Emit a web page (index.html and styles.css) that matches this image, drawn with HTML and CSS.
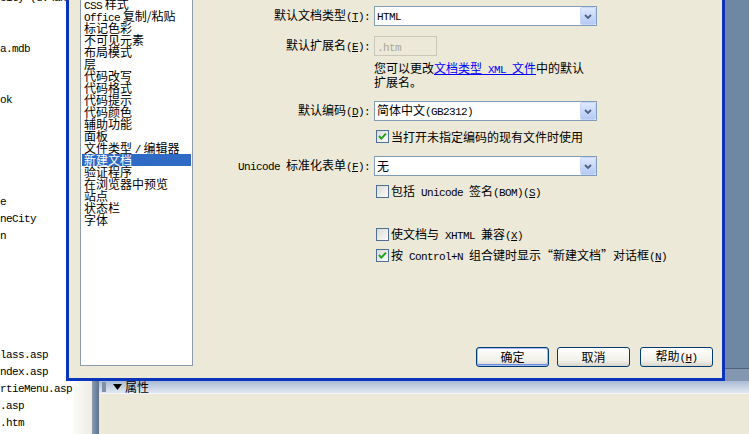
FILE: index.html
```html
<!DOCTYPE html>
<html lang="zh-CN">
<head>
<meta charset="utf-8">
<title>首选参数 - 新建文档</title>
<link rel="stylesheet" href="styles.css">
</head>
<body>
<!-- application behind the dialog -->
<div class="app">
  <div class="files">
    <div class="file">city (d:\an</div>
    <div class="file"></div>
    <div class="file"></div>
    <div class="file">a.mdb</div>
    <div class="file"></div>
    <div class="file"></div>
    <div class="file">ok</div>
    <div class="file"></div>
    <div class="file"></div>
    <div class="file"></div>
    <div class="file"></div>
    <div class="file"></div>
    <div class="file">e</div>
    <div class="file">neCity</div>
    <div class="file">n</div>
    <div class="file"></div>
    <div class="file"></div>
    <div class="file"></div>
    <div class="file"></div>
    <div class="file"></div>
    <div class="file"></div>
    <div class="file">lass.asp</div>
    <div class="file">ndex.asp</div>
    <div class="file">rtieMenu.asp</div>
    <div class="file">.asp</div>
    <div class="file">.htm</div>
  </div>
  <div class="splitter"></div>
  <div class="work">
    <div class="docarea"></div>
    <div class="strip"></div>
    <div class="props">
      <div class="props-grip"></div>
      <div class="props-main">
        <div class="props-head">
          <span class="dots"></span>
          <svg class="tri" width="9" height="6" viewBox="0 0 9 6"><polygon points="0,0 9,0 4.5,6" fill="#000"/></svg>
          <span>属性</span>
        </div>
        <div class="props-body"></div>
      </div>
    </div>
  </div>
</div>

<!-- preferences dialog -->
<div class="dialog">
  <div class="cats">
    <div class="cat">常规</div>
    <div class="cat"><span class="en">CSS</span> 样式</div>
    <div class="cat"><span class="en">Office</span> 复制/粘贴</div>
    <div class="cat">标记色彩</div>
    <div class="cat">不可见元素</div>
    <div class="cat">布局模式</div>
    <div class="cat">层</div>
    <div class="cat">代码改写</div>
    <div class="cat">代码格式</div>
    <div class="cat">代码提示</div>
    <div class="cat">代码颜色</div>
    <div class="cat">辅助功能</div>
    <div class="cat">面板</div>
    <div class="cat">文件类型 <span class="en">/</span> 编辑器</div>
    <div class="cat selected">新建文档</div>
    <div class="cat">验证程序</div>
    <div class="cat">在浏览器中预览</div>
    <div class="cat">站点</div>
    <div class="cat">状态栏</div>
    <div class="cat">字体</div>
  </div>

  <div class="form">
    <div class="row">
      <span class="lab">默认文档类型<span class="en">(<u>T</u>):</span></span>
      <div class="combo"><span class="combo-text"><span class="en">HTML</span></span><span class="drop"><svg width="8" height="5" viewBox="0 0 8 5"><path d="M1 1 L4 4 L7 1" stroke="#4d6185" stroke-width="1.8" fill="none"/></svg></span></div>
    </div>
    <div class="row r-ext">
      <span class="lab">默认扩展名<span class="en">(<u>E</u>):</span></span>
      <div class="textbox disabled"><span class="en">.htm</span></div>
    </div>
    <div class="row r-note">
      <span class="lab"></span>
      <p class="note">您可以更改<a href="#">文档类型<span class="en"> XML </span>文件</a>中的默认<br>扩展名。</p>
    </div>
    <div class="row r-enc">
      <span class="lab">默认编码<span class="en">(<u>D</u>):</span></span>
      <div class="combo"><span class="combo-text">简体中文<span class="en">(GB2312)</span></span><span class="drop"><svg width="8" height="5" viewBox="0 0 8 5"><path d="M1 1 L4 4 L7 1" stroke="#4d6185" stroke-width="1.8" fill="none"/></svg></span></div>
    </div>
    <label class="check r-chk">
      <span class="box"><svg width="11" height="11" viewBox="0 0 11 11"><path d="M2 5 L4.3 7.6 L9 2.6" stroke="#21a121" stroke-width="2" fill="none"/></svg></span>
      <span>当打开未指定编码的现有文件时使用</span>
    </label>
    <div class="row r-enc">
      <span class="lab"><span class="en">Unicode </span>标准化表单<span class="en">(<u>F</u>):</span></span>
      <div class="combo"><span class="combo-text">无</span><span class="drop"><svg width="8" height="5" viewBox="0 0 8 5"><path d="M1 1 L4 4 L7 1" stroke="#4d6185" stroke-width="1.8" fill="none"/></svg></span></div>
    </div>
    <label class="check r-chk">
      <span class="box"></span>
      <span>包括<span class="en"> Unicode </span>签名<span class="en">(BOM)(<u>S</u>)</span></span>
    </label>
    <label class="check r-xhtml">
      <span class="box"></span>
      <span>使文档与<span class="en"> XHTML </span>兼容<span class="en">(<u>X</u>)</span></span>
    </label>
    <label class="check r-ctrl">
      <span class="box"><svg width="11" height="11" viewBox="0 0 11 11"><path d="M2 5 L4.3 7.6 L9 2.6" stroke="#21a121" stroke-width="2" fill="none"/></svg></span>
      <span>按<span class="en"> Control+N </span>组合键时显示“新建文档”对话框<span class="en">(<u>N</u>)</span></span>
    </label>

    <div class="buttons">
      <button class="btn default">确定</button>
      <button class="btn">取消</button>
      <button class="btn help">帮助<span class="en">(<u>H</u>)</span></button>
    </div>
  </div>
</div>
</body>
</html>
```

FILE: styles.css
```css
* {
	box-sizing: border-box;
}
html, body {
	margin: 0;
}
body {
	position: relative;
	width: 749px;
	height: 434px;
	overflow: hidden;
	font-family: "Noto Sans CJK SC", sans-serif;
	font-size: 12px;
	line-height: 12px;
	color: #000;
	background: #ece9d8;
}
.en {
	font-family: "Liberation Mono", "Noto Sans CJK SC", monospace;
	font-size: 11px;
	letter-spacing: -0.6px;
}

/* app behind */
.app {
	display: flex;
	height: 434px;
}
.files {
	width: 73px;
	background: #fff;
	overflow: hidden;
}
.file {
	height: 17px;
	line-height: 17px;
	white-space: nowrap;
	font-family: "Liberation Mono", monospace;
	font-size: 11px;
	letter-spacing: -0.6px;
}
.file:first-child {
	margin-top: -10px;
}
.splitter {
	width: 19px;
	background: linear-gradient(to right, #fbfbf8, #eeece2);
}
.work {
	flex: 1;
	display: flex;
	flex-direction: column;
}
.docarea {
	height: 368px;
	background: #6e87a3;
}
.strip {
	height: 13px;
	background: #8397b1;
	border-top: 1px solid #4f627b;
}
.props {
	flex: 1;
	display: flex;
}
.props-grip {
	width: 7px;
	background: linear-gradient(to right, #8c9db4, #5d718d);
}
.props-main {
	flex: 1;
	display: flex;
	flex-direction: column;
}
.props-head {
	height: 13px;
	display: flex;
	align-items: center;
	padding-left: 3px;
	background: linear-gradient(#a9bbd5, #e2e8f0);
	border-bottom: 1px solid #f3f5f8;
}
.dots {
	width: 4px;
	height: 10px;
	background-image: radial-gradient(#7d8ea8 0.7px, transparent 0.9px);
	background-size: 2px 2px;
}
.tri {
	margin-left: 7px;
	margin-right: 3px;
}
.props-body {
	flex: 1;
	background: #ece9d8;
}

/* dialog */
.dialog {
	position: absolute;
	left: 66px;
	top: -40px;
	width: 659px;
	height: 421px;
	display: flex;
	padding: 21px 0 11px 11px;
	background: #ece9d8;
	border: 3px solid #0b34bd;
}
.cats {
	width: 113px;
	margin-bottom: 1px;
	padding: 1px;
	background: #fff;
	border: 1px solid #8d9aab;
}
.cat {
	height: 12px;
	padding-left: 2px;
	white-space: nowrap;
}
.cat.selected {
	background: #316ac5;
	color: #fff;
}
.form {
	flex: 1;
	display: flex;
	flex-direction: column;
	padding-top: 22px;
}
.row {
	display: flex;
	align-items: center;
}
.lab {
	width: 177px;
	margin-right: 4px;
	text-align: right;
	white-space: nowrap;
}
.r-ext { margin-top: 10px; }
.r-note { margin-top: 6px; align-items: flex-start; }
.r-enc { margin-top: 13px; }
.r-chk { margin-top: 9px; }
.r-xhtml { margin-top: 30px; }
.r-ctrl { margin-top: 8px; }

.combo {
	width: 223px;
	height: 20px;
	display: flex;
	align-items: center;
	padding-left: 2px;
	background: #fff;
	border: 1px solid #7f9db9;
}
.combo-text {
	flex: 1;
	white-space: nowrap;
}
.drop {
	width: 16px;
	height: 18px;
	display: flex;
	align-items: center;
	justify-content: center;
	background: linear-gradient(#dfe8fd, #b5c9f5);
	border: 1px solid #c6d5f8;
	border-radius: 2px;
}
.textbox {
	width: 63px;
	height: 20px;
	padding: 3px 2px 0;
	border: 1px solid #c9c7ba;
}
.textbox.disabled {
	color: #aca899;
	background: #ece9d8;
}
.note {
	margin: 0;
	width: 223px;
}
.note a {
	color: #0000ff;
}
.check {
	display: flex;
	align-items: center;
	height: 13px;
	margin-left: 183px;
	white-space: nowrap;
}
.box {
	width: 13px;
	height: 13px;
	margin-right: 2px;
	flex: none;
	display: flex;
	align-items: center;
	justify-content: center;
	border: 1px solid #4f6e96;
	background: linear-gradient(135deg, #dcdcd5, #fbfbf9);
}
.buttons {
	margin-top: auto;
	display: flex;
	justify-content: flex-end;
	padding-right: 9px;
}
.btn {
	width: 73px;
	height: 20px;
	padding: 0;
	margin-left: 8px;
	font: inherit;
	color: #000;
	border: 1px solid #003c74;
	border-radius: 3px;
	background: linear-gradient(#ffffff, #f1f0ea 70%, #d8d4c8);
}
.btn.default {
	box-shadow: inset 0 0 0 1px #a5bbef, inset 0 -1px 0 1px #6a8ee0;
}
.btn.help {
	margin-left: 10px;
}
```
